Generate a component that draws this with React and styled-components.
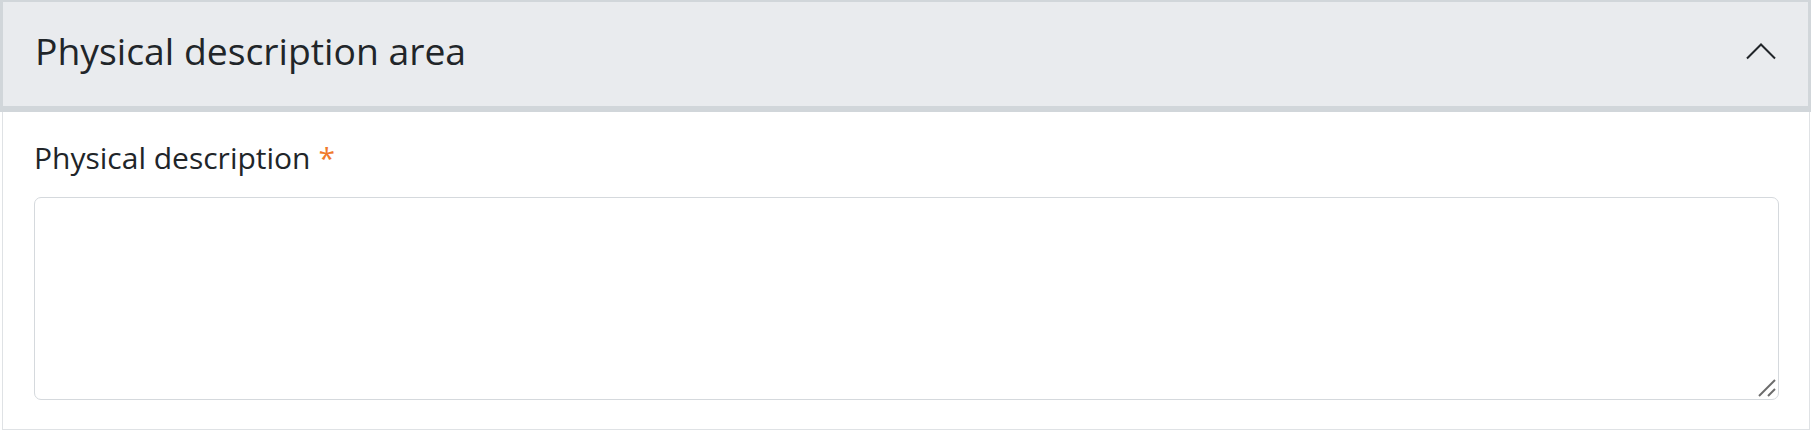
import React from "react";
import styled, { createGlobalStyle } from "styled-components";

const Global = createGlobalStyle`
  html, body { margin: 0; padding: 0; background: #ffffff; }
  body { font-family: "Open Sans", "Noto Sans", sans-serif; color: #212529; }
  * { box-sizing: border-box; }
`;

const Item = styled.section`
  width: 1811px;
  display: flex;
  flex-direction: column;
`;

const Header = styled.button`
  display: flex;
  align-items: center;
  justify-content: space-between;
  width: 100%;
  margin: 0;
  padding: 21px 32px 27px 32px;
  background: #e9ebee;
  border-style: solid;
  border-color: #d1d6da;
  border-width: 2px 3px 6px 3px;
  font-family: "Open Sans", "Noto Sans", sans-serif;
  font-size: 37.3px;
  line-height: 56px;
  color: #212529;
  text-align: left;
  cursor: pointer;
`;

const Title = styled.span`
  font-weight: 400;
`;

const Body = styled.div`
  margin: 0 1px 0 2px;
  border: 1px solid #dfe2e5;
  border-top: none;
  padding: 23px 30px 29px 31px;
  display: flex;
  flex-direction: column;
`;

const Label = styled.label`
  font-size: 30px;
  line-height: 45px;
  color: #212529;
  margin-bottom: 17px;
`;

const Required = styled.span`
  color: #f07a2c;
  margin-left: 8px;
`;

const FieldWrap = styled.div`
  position: relative;
  width: 100%;
`;

const Field = styled.textarea`
  display: block;
  width: 100%;
  height: 203px;
  border: 1px solid #d5d9dd;
  border-radius: 7px;
  font-family: "Open Sans", "Noto Sans", sans-serif;
  font-size: 30px;
  padding: 10px 16px;
  resize: none;
  background: #fff;
  outline: none;
`;

const Grip = styled.svg`
  position: absolute;
  right: 3px;
  bottom: 3px;
  pointer-events: none;
`;

const Chevron = () => (
  <svg width="30" height="18" viewBox="0 0 30 18" fill="none">
    <polyline points="1,16.5 15,2.5 29,16.5" stroke="#212529" strokeWidth="2" strokeLinecap="butt" strokeLinejoin="miter" />
  </svg>
);

export default function App() {
  return (
    <>
      <Global />
      <Item>
        <Header type="button">
          <Title>Physical description area</Title>
          <Chevron />
        </Header>
        <Body>
          <Label htmlFor="physdesc">
            Physical description<Required>*</Required>
          </Label>
          <FieldWrap>
            <Field id="physdesc" />
            <Grip width="18" height="18" viewBox="0 0 18 18">
              <line x1="1" y1="17" x2="17" y2="1" stroke="#6b6b6b" strokeWidth="2" />
              <line x1="10" y1="17" x2="17" y2="10" stroke="#6b6b6b" strokeWidth="2" />
            </Grip>
          </FieldWrap>
        </Body>
      </Item>
    </>
  );
}
